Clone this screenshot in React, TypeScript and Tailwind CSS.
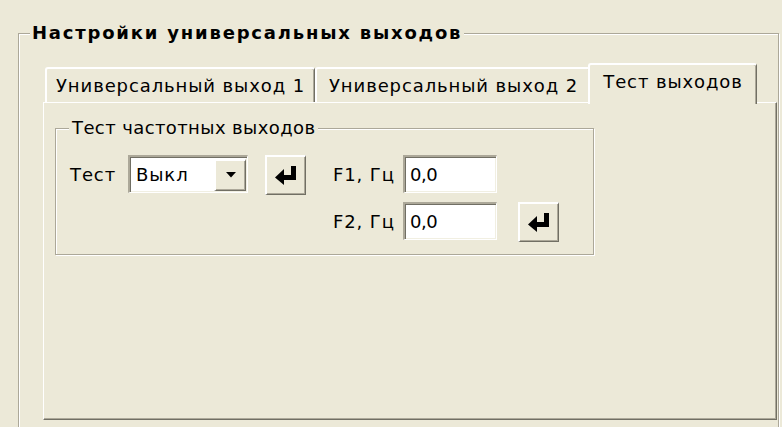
import React from "react";

const raised =
  "bg-[#ECE9D8] border-t-2 border-l-2 border-t-white border-l-white border-b border-r border-b-[#716F64] border-r-[#716F64] shadow-[inset_-1px_-1px_0_#ACA899]";
const sunken =
  "bg-white border-t-2 border-l-2 border-t-[#ACA899] border-l-[#ACA899] border-b border-r border-b-white border-r-white shadow-[inset_1px_1px_0_#716F64,inset_-1px_-1px_0_#F1EFE2]";

function EnterIcon() {
  return (
    <svg width="22" height="19" viewBox="0 0 22 19" aria-hidden="true">
      <rect x="16" y="0" width="5" height="14" fill="#000" />
      <rect x="8" y="9" width="13" height="5" fill="#000" />
      <polygon points="0,11.5 9,3 9,19" fill="#000" />
    </svg>
  );
}

function EnterButton() {
  return (
    <button type="button" className={`${raised} w-[41px] h-[40px] flex items-center justify-center`}>
      <EnterIcon />
    </button>
  );
}

function Combo() {
  return (
    <div className={`${sunken} w-[120px] h-[38px] flex items-center`}>
      <span className="pl-[6px] flex-1">Выкл</span>
      <div className={`${raised} w-[32px] h-[32px] mr-[1px] flex items-center justify-center`}>
        <svg width="10" height="6" viewBox="0 0 10 6" aria-hidden="true">
          <polygon points="0,0 10,0 5,5.5" fill="#000" />
        </svg>
      </div>
    </div>
  );
}

function Field({ value }: { value: string }) {
  return (
    <div className={`${sunken} w-[94px] h-[38px] flex items-center pl-[5px]`}>
      <span className="tracking-[-0.5px]">{value}</span>
    </div>
  );
}

function Tab({ label, active, width }: { label: string; active?: boolean; width: string }) {
  if (active) {
    return (
      <div
        className={`${width} relative z-10 -ml-[3px] -mb-[2px] h-[41px] pb-[6px] bg-[#ECE9D8] rounded-t-[3px] border-t-2 border-l-2 border-t-white border-l-white border-r border-r-[#716F64] shadow-[inset_-1px_0_0_#ACA899] flex items-center justify-center`}
      >
        {label}
      </div>
    );
  }
  return (
    <div
      className={`${width} h-[35px] rounded-t-[3px] border-t-2 border-l-2 border-t-white border-l-white border-r border-r-[#716F64] shadow-[inset_-1px_0_0_#ACA899] flex items-center justify-center pt-[1px]`}
    >
      {label}
    </div>
  );
}

export default function App() {
  return (
    <div className="w-[782px] h-[427px] overflow-hidden bg-[#ECE9D8] pt-[23px] pl-[18px] pr-[3px] text-black text-[18px] leading-[20px] tracking-[0.9px] font-['DejaVu_Sans',sans-serif]">
      <fieldset className="h-[440px] border border-[#ACA899] shadow-[inset_1px_1px_0_#fff,1px_1px_0_#fff]">
        <legend className="ml-[11px] px-[2px] font-bold tracking-[1.8px] leading-[20px] bg-[#ECE9D8]">
          Настройки универсальных выходов
        </legend>
        <div className="pl-[24px] pt-[20px]">
          <div className="flex items-end h-[39px] pl-[2px]">
            <Tab label="Универсальный выход 1" width="w-[270px]" />
            <Tab label="Универсальный выход 2" width="w-[276px]" />
            <Tab label="Тест выходов" width="w-[169px]" active />
          </div>
          <div className="w-[734px] h-[318px] border-t border-l border-t-white border-l-white border-b border-r border-b-[#716F64] border-r-[#716F64] shadow-[inset_-1px_-1px_0_#ACA899] pl-[11px] pt-[15px]">
            <fieldset className="w-[539px] border border-[#ACA899] shadow-[inset_1px_1px_0_#fff,1px_1px_0_#fff]">
              <legend className="ml-[13px] px-[3px] leading-[20px] tracking-[0.4px] bg-[#ECE9D8]">
                Тест частотных выходов
              </legend>
              <div className="pl-[14px] pt-[17px] pb-[12px] grid grid-cols-[58px_137px_68px_70px_115px_42px] grid-rows-[40px_40px] gap-y-[7px]">
                <div className="self-center">Тест</div>
                <div className="self-start">
                  <Combo />
                </div>
                <div>
                  <EnterButton />
                </div>
                <div className="self-center">F1, Гц</div>
                <div className="self-start">
                  <Field value="0,0" />
                </div>
                <div />
                <div />
                <div />
                <div />
                <div className="self-center">F2, Гц</div>
                <div className="self-start">
                  <Field value="0,0" />
                </div>
                <div>
                  <EnterButton />
                </div>
              </div>
            </fieldset>
          </div>
        </div>
      </fieldset>
    </div>
  );
}
